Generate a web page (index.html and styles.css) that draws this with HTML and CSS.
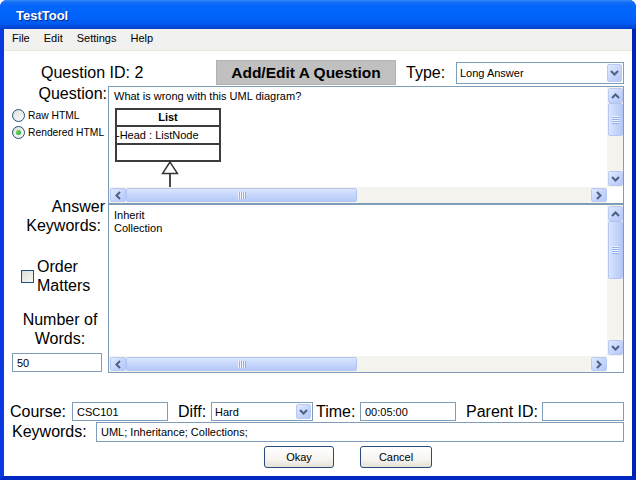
FILE: index.html
```html
<!DOCTYPE html>
<html>
<head>
<meta charset="utf-8">
<title>TestTool</title>
<link rel="stylesheet" href="styles.css">
</head>
<body>
<div class="window">
  <div class="titlebar"><span class="title">TestTool</span></div>
  <div class="frame">
    <div class="menubar"><span>File</span><span>Edit</span><span>Settings</span><span>Help</span></div>
    <div class="content">
      <div class="toprow">
        <div class="qid">Question ID: 2</div>
        <div class="heading">Add/Edit A Question</div>
        <div class="typelabel">Type:</div>
        <div class="select type-select">
          <span class="sel-text">Long Answer</span>
          <span class="sbtn sel-btn"><svg width="9" height="6" viewBox="0 0 9 6"><path d="M1 1 L4.5 4.5 L8 1"/></svg></span>
        </div>
      </div>

      <div class="main">
        <div class="side">
          <div class="q-label">Question:</div>
          <div class="radios">
            <div class="radio"><span class="radio-dot"></span><span>Raw HTML</span></div>
            <div class="radio"><span class="radio-dot checked"></span><span>Rendered HTML</span></div>
          </div>
          <div class="ak-label"><span class="ak1">Answer</span><span class="ak2">Keywords:</span></div>
          <div class="order"><span class="checkbox"></span><span class="order-text">Order<br>Matters</span></div>
          <div class="nwords">Number of<br>Words:</div>
          <div class="input nw-input">50</div>
        </div>

        <div class="editors">
          <div class="pane qpane">
            <div class="pane-body qbody">
              <div class="qtext">What is wrong with this UML diagram?</div>
              <div class="uml">
                <div class="uml-title">List</div>
                <div class="uml-attr">-Head : ListNode</div>
                <div class="uml-ops"></div>
              </div>
              <svg class="uml-arrow" width="20" height="30" viewBox="0 0 20 30">
                <line x1="10" y1="12" x2="10" y2="30" stroke="#4a4a4a" stroke-width="2"/>
                <polygon points="10,1 2.5,12.5 17.5,12.5" fill="#fff" stroke="#333" stroke-width="1.4"/>
              </svg>
            </div>
            <div class="vscroll">
              <div class="sbtn"><svg width="9" height="6" viewBox="0 0 9 6"><path d="M1 5 L4.5 1.5 L8 5"/></svg></div>
              <div class="vthumb short"><span class="grip-v"></span></div>
              <div class="strack"></div>
              <div class="sbtn"><svg width="9" height="6" viewBox="0 0 9 6"><path d="M1 1 L4.5 4.5 L8 1"/></svg></div>
            </div>
            <div class="hscroll">
              <div class="sbtn"><svg width="6" height="9" viewBox="0 0 6 9"><path d="M5 1 L1.5 4.5 L5 8"/></svg></div>
              <div class="hthumb"><span class="grip-h"></span></div>
              <div class="strack"></div>
              <div class="sbtn"><svg width="6" height="9" viewBox="0 0 6 9"><path d="M1 1 L4.5 4.5 L1 8"/></svg></div>
            </div>
            <div class="corner"></div>
          </div>

          <div class="pane apane">
            <div class="pane-body abody">Inherit<br>Collection</div>
            <div class="vscroll">
              <div class="sbtn"><svg width="9" height="6" viewBox="0 0 9 6"><path d="M1 5 L4.5 1.5 L8 5"/></svg></div>
              <div class="vthumb tall"><span class="grip-v"></span></div>
              <div class="strack"></div>
              <div class="sbtn"><svg width="9" height="6" viewBox="0 0 9 6"><path d="M1 1 L4.5 4.5 L8 1"/></svg></div>
            </div>
            <div class="hscroll">
              <div class="sbtn"><svg width="6" height="9" viewBox="0 0 6 9"><path d="M5 1 L1.5 4.5 L5 8"/></svg></div>
              <div class="hthumb"><span class="grip-h"></span></div>
              <div class="strack"></div>
              <div class="sbtn"><svg width="6" height="9" viewBox="0 0 6 9"><path d="M1 1 L4.5 4.5 L1 8"/></svg></div>
            </div>
            <div class="corner"></div>
          </div>
        </div>
      </div>

      <div class="fields">
        <span class="lbl lbl-course">Course:</span>
        <div class="input in-course">CSC101</div>
        <span class="lbl lbl-diff">Diff:</span>
        <div class="select diff-select">
          <span class="sel-text">Hard</span>
          <span class="sbtn sel-btn"><svg width="9" height="6" viewBox="0 0 9 6"><path d="M1 1 L4.5 4.5 L8 1"/></svg></span>
        </div>
        <span class="lbl lbl-time">Time:</span>
        <div class="input in-time">00:05:00</div>
        <span class="lbl lbl-parent">Parent ID:</span>
        <div class="input in-parent"></div>
      </div>

      <div class="kwrow">
        <span class="lbl lbl-kw">Keywords:</span>
        <div class="input in-kw">UML; Inheritance; Collections;</div>
      </div>

      <div class="actions">
        <div class="btn btn-okay">Okay</div>
        <div class="btn btn-cancel">Cancel</div>
      </div>
    </div>
  </div>
</div>
</body>
</html>
```

FILE: styles.css
```css
body {
  margin: 0;
  background: #fff;
  font-family: "Liberation Sans", Arial, sans-serif;
  color: #000;
}

.window {
  width: 636px;
  height: 480px;
  display: flex;
  flex-direction: column;
  border-radius: 7px 7px 0 0;
  overflow: hidden;
  background: #0831d9;
}

.titlebar {
  height: 29px;
  flex: none;
  box-sizing: border-box;
  padding-left: 16px;
  background: linear-gradient(to bottom, #3a8cf7 0, #1570f5 2px, #0466fc 6px, #0063fb 50%, #005cf2 80%, #0049da 93%, #0040cc 100%);
}

.title {
  display: block;
  padding-top: 3px;
  line-height: 26px;
  color: #fff;
  font-weight: bold;
  font-size: 13px;
  text-shadow: 1px 1px 0 #0a2a90;
}

.frame {
  flex: 1;
  display: flex;
  flex-direction: column;
  border-left: 4px solid #0838e0;
  border-right: 4px solid #0022b8;
  border-bottom: 4px solid #0028c2;
  background: #fff;
}

.menubar {
  height: 22px;
  flex: none;
  box-sizing: border-box;
  display: flex;
  padding-left: 1px;
  background: #f1f1f0;
  border-bottom: 1px solid #ece6d6;
  font-size: 11px;
  line-height: 19px;
}

.menubar span {
  padding: 0 7px;
}

.content {
  flex: 1;
  display: flex;
  flex-direction: column;
}

/* top row */
.toprow {
  display: flex;
  align-items: center;
  height: 25px;
  margin-top: 9px;
}

.qid {
  width: 212px;
  box-sizing: border-box;
  padding-left: 37px;
  font-size: 16px;
}

.heading {
  width: 180px;
  height: 25px;
  box-sizing: border-box;
  background: #c0c0c0;
  border: 1px solid #b2b2b2;
  font-weight: bold;
  font-size: 15.5px;
  line-height: 23px;
  text-align: center;
  white-space: nowrap;
}

.typelabel {
  width: 50px;
  margin-left: 10px;
  font-size: 16px;
}

.select {
  display: flex;
  align-items: center;
  box-sizing: border-box;
  background: #fff;
  border: 1px solid #7f9db9;
  font-size: 11px;
}

.sel-text {
  flex: 1;
  padding-left: 3px;
}

.type-select {
  width: 168px;
  height: 22px;
}

.sel-btn {
  align-self: stretch;
  width: 15px;
  margin: 1px;
}

/* scroll parts */
.sbtn {
  flex: none;
  box-sizing: border-box;
  display: flex;
  align-items: center;
  justify-content: center;
  border: 1px solid #b8caf4;
  border-radius: 2px;
  background: linear-gradient(135deg, #e2eafe 0%, #c9d8fc 45%, #b5c8f7 100%);
}

.sbtn svg path {
  fill: none;
  stroke: #4d6185;
  stroke-width: 2;
}

.main {
  display: grid;
  grid-template-columns: 104px 516px;
  margin-top: 1px;
}

.side {
  display: flex;
  flex-direction: column;
  white-space: nowrap;
}

.q-label {
  margin-top: -1px;
  padding-right: 1px;
  text-align: right;
  font-size: 16px;
  line-height: 18px;
}

.radios {
  margin-top: 4px;
  padding-left: 8px;
}

.radio {
  display: flex;
  align-items: center;
  gap: 3px;
  height: 17px;
  font-size: 10.3px;
}

.radio-dot {
  flex: none;
  width: 13px;
  height: 13px;
  box-sizing: border-box;
  border-radius: 50%;
  border: 1px solid #1c5180;
  background: linear-gradient(135deg, #dcdcd7, #fff);
  display: flex;
  align-items: center;
  justify-content: center;
}

.radio-dot.checked::after {
  content: "";
  width: 5px;
  height: 5px;
  border-radius: 50%;
  background: radial-gradient(circle at 35% 35%, #6fdb5f, #21a121);
}

.ak-label {
  display: flex;
  flex-direction: column;
  align-items: flex-end;
  margin-top: 56px;
  font-size: 16px;
  line-height: 19px;
}

.ak1 {
  padding-right: 3px;
}

.ak2 {
  padding-right: 7px;
}

.order {
  display: flex;
  align-items: center;
  gap: 3px;
  margin-top: 22px;
  padding-left: 17px;
  font-size: 16px;
  line-height: 19px;
}

.checkbox {
  flex: none;
  width: 13px;
  height: 13px;
  box-sizing: border-box;
  border: 1px solid #1c5180;
  background: linear-gradient(135deg, #dcdcd7, #f8f8f6);
}

.nwords {
  margin-top: 15px;
  padding-left: 8px;
  text-align: center;
  font-size: 16px;
  line-height: 19px;
}

.input {
  box-sizing: border-box;
  border: 1px solid #7f9db9;
  background: #fff;
  padding-left: 4px;
  font-size: 11px;
  display: flex;
  align-items: center;
}

.nw-input {
  margin-top: 5px;
  margin-left: 8px;
  width: 90px;
  height: 19px;
}

.editors {
  display: flex;
  flex-direction: column;
}

.pane {
  display: grid;
  grid-template-columns: 1fr 16px;
  box-sizing: border-box;
  border: 1px solid #7f9db9;
  background: #fff;
}

.qpane {
  height: 118px;
  grid-template-rows: 100px 16px;
}

.apane {
  height: 169px;
  grid-template-rows: 151px 16px;
}

.pane-body {
  overflow: hidden;
  font-size: 11px;
  line-height: 13px;
  padding-left: 5px;
}

.qbody {
  padding-top: 3px;
}

.abody {
  padding-top: 4px;
}

.uml {
  width: 106px;
  margin-top: 5px;
  margin-left: 1px;
  box-sizing: border-box;
  border: 2px solid #3c3c3c;
}

.uml-title {
  height: 17px;
  box-sizing: border-box;
  border-bottom: 2px solid #3c3c3c;
  text-align: center;
  font-weight: bold;
  line-height: 15px;
}

.uml-attr {
  height: 18px;
  box-sizing: border-box;
  border-bottom: 2px solid #3c3c3c;
  line-height: 16px;
  margin-left: -1px;
}

.uml-ops {
  height: 15px;
}

.uml-arrow {
  display: block;
  margin-left: 46px;
  margin-top: -1px;
}

.vscroll {
  display: flex;
  flex-direction: column;
  padding: 1px 0 1px 1px;
  background: #f4f3ee;
}

.vscroll .sbtn {
  height: 15px;
}

.vthumb {
  flex: none;
  box-sizing: border-box;
  display: flex;
  align-items: center;
  justify-content: center;
  border: 1px solid #b3c6f3;
  border-radius: 2px;
  background: linear-gradient(to right, #dbe6fe 0%, #c6d6fc 50%, #b7caf7 100%);
}

.vthumb.short {
  height: 33px;
}

.vthumb.tall {
  height: 58px;
}

.grip-v {
  width: 7px;
  height: 8px;
  background: repeating-linear-gradient(to bottom, #eef4ff 0 1px, #90aef0 1px 2px);
}

.strack {
  flex: 1;
}

.hscroll {
  display: flex;
  padding: 1px 0 1px 1px;
  background: #f4f3ee;
}

.hscroll .sbtn {
  width: 16px;
}

.hthumb {
  flex: none;
  width: 231px;
  box-sizing: border-box;
  display: flex;
  align-items: center;
  justify-content: center;
  border: 1px solid #b3c6f3;
  border-radius: 2px;
  background: linear-gradient(to bottom, #dbe6fe 0%, #c6d6fc 50%, #b7caf7 100%);
}

.grip-h {
  width: 8px;
  height: 7px;
  background: repeating-linear-gradient(to right, #eef4ff 0 1px, #90aef0 1px 2px);
}

.corner {
  background: #fff;
}

/* bottom fields */
.fields {
  display: flex;
  align-items: center;
  height: 19px;
  margin-top: 29px;
  padding-left: 6px;
}

.lbl {
  font-size: 16px;
  flex: none;
}

.lbl-course {
  width: 62px;
}

.in-course {
  width: 96px;
  height: 19px;
}

.lbl-diff {
  width: 33px;
  margin-left: 10px;
}

.diff-select {
  width: 102px;
  height: 19px;
}

.lbl-time {
  width: 44px;
  margin-left: 3px;
}

.in-time {
  width: 96px;
  height: 19px;
}

.lbl-parent {
  width: 76px;
  margin-left: 10px;
}

.in-parent {
  width: 82px;
  height: 19px;
}

.kwrow {
  display: flex;
  align-items: center;
  height: 20px;
  margin-top: 1px;
  padding-left: 8px;
}

.lbl-kw {
  width: 84px;
}

.in-kw {
  width: 528px;
  height: 20px;
}

.actions {
  display: flex;
  gap: 26px;
  margin-top: 4px;
  padding-left: 260px;
}

.btn {
  height: 22px;
  box-sizing: border-box;
  border: 1px solid #2a4a78;
  border-radius: 3px;
  background: linear-gradient(to bottom, #ffffff 0%, #f6f5f1 60%, #e4e1d6 100%);
  font-size: 11px;
  line-height: 20px;
  text-align: center;
}

.btn-okay {
  width: 70px;
}

.btn-cancel {
  width: 72px;
}
```
